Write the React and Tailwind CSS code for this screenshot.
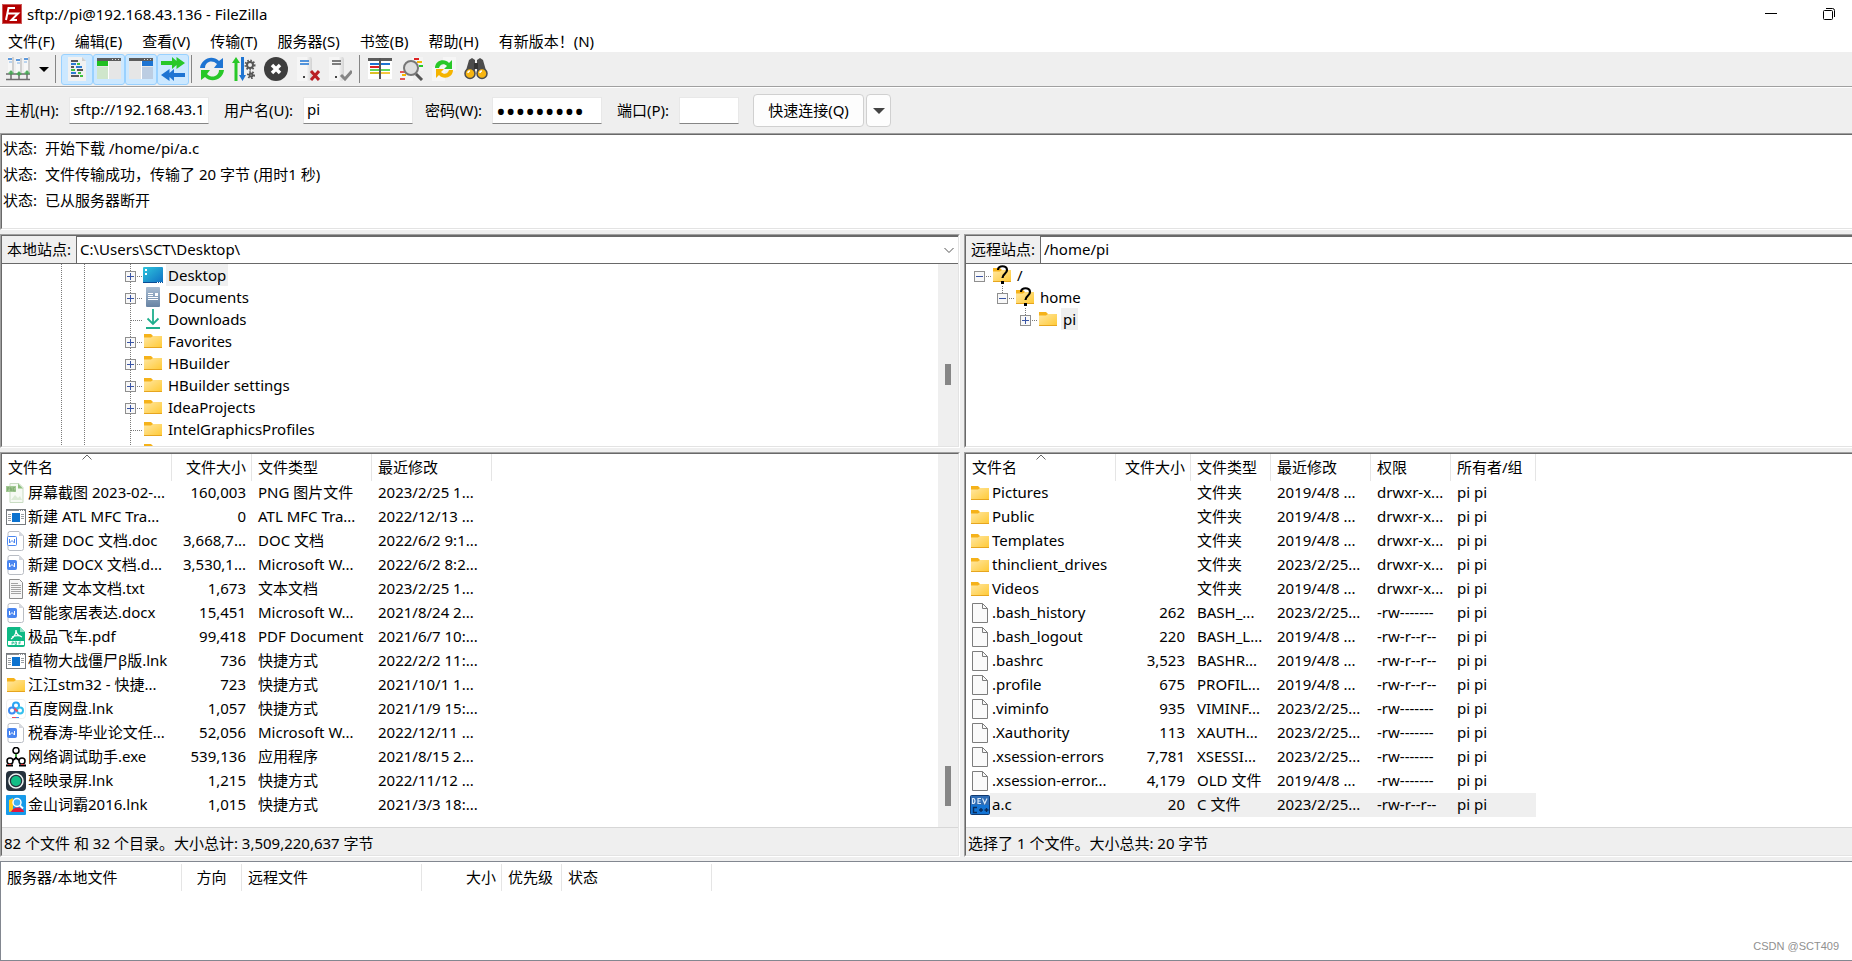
import React, { useState } from "react";

const menus = [
  "文件(F)",
  "编辑(E)",
  "查看(V)",
  "传输(T)",
  "服务器(S)",
  "书签(B)",
  "帮助(H)",
  "有新版本！(N)",
];

const logs = [
  "开始下载 /home/pi/a.c",
  "文件传输成功，传输了 20 字节 (用时1 秒)",
  "已从服务器断开",
];

const localTree = [
  { name: "Desktop", icon: "desktop", open: "plus", selected: true },
  { name: "Documents", icon: "documents", open: "plus" },
  { name: "Downloads", icon: "downloads" },
  { name: "Favorites", icon: "folder", open: "plus" },
  { name: "HBuilder", icon: "folder", open: "plus" },
  { name: "HBuilder settings", icon: "folder", open: "plus" },
  { name: "IdeaProjects", icon: "folder", open: "plus" },
  { name: "IntelGraphicsProfiles", icon: "folder" },
  { name: "Links", icon: "folder" },
];

const localColumns = [
  { label: "文件名", width: 170, sorted: true },
  { label: "文件大小", width: 80, right: true },
  { label: "文件类型", width: 120 },
  { label: "最近修改", width: 120 },
];

const localFiles = [
  ["png", "屏幕截图 2023-02-...", "160,003", "PNG 图片文件", "2023/2/25 1..."],
  ["app", "新建 ATL MFC Tra...", "0", "ATL MFC Tra...", "2022/12/13 ..."],
  ["doc", "新建 DOC 文档.doc", "3,668,7...", "DOC 文档", "2022/6/2 9:1..."],
  ["docx", "新建 DOCX 文档.d...", "3,530,1...", "Microsoft W...", "2022/6/2 8:2..."],
  ["txt", "新建 文本文档.txt", "1,673", "文本文档", "2023/2/25 1..."],
  ["docx", "智能家居表达.docx", "15,451", "Microsoft W...", "2021/8/24 2..."],
  ["pdf", "极品飞车.pdf", "99,418", "PDF Document", "2021/6/7 10:..."],
  ["app", "植物大战僵尸β版.lnk", "736", "快捷方式", "2022/2/2 11:..."],
  ["folder", "江江stm32 - 快捷...", "723", "快捷方式", "2021/10/1 1..."],
  ["baidu", "百度网盘.lnk", "1,057", "快捷方式", "2021/1/9 15:..."],
  ["docx", "税春涛-毕业论文任...", "52,056", "Microsoft W...", "2022/12/11 ..."],
  ["net", "网络调试助手.exe", "539,136", "应用程序", "2021/8/15 2..."],
  ["record", "轻映录屏.lnk", "1,215", "快捷方式", "2022/11/12 ..."],
  ["dict", "金山词霸2016.lnk", "1,015", "快捷方式", "2021/3/3 18:..."],
];

const remoteColumns = [
  { label: "文件名", width: 150, sorted: true },
  { label: "文件大小", width: 75, right: true },
  { label: "文件类型", width: 80 },
  { label: "最近修改", width: 100 },
  { label: "权限", width: 80 },
  { label: "所有者/组", width: 85 },
];

const remoteFiles = [
  ["folder", "Pictures", "", "文件夹", "2019/4/8 ...", "drwxr-x...", "pi pi"],
  ["folder", "Public", "", "文件夹", "2019/4/8 ...", "drwxr-x...", "pi pi"],
  ["folder", "Templates", "", "文件夹", "2019/4/8 ...", "drwxr-x...", "pi pi"],
  ["folder", "thinclient_drives", "", "文件夹", "2023/2/25...", "drwxr-x...", "pi pi"],
  ["folder", "Videos", "", "文件夹", "2019/4/8 ...", "drwxr-x...", "pi pi"],
  ["file", ".bash_history", "262", "BASH_...", "2023/2/25...", "-rw-------", "pi pi"],
  ["file", ".bash_logout", "220", "BASH_L...", "2019/4/8 ...", "-rw-r--r--", "pi pi"],
  ["file", ".bashrc", "3,523", "BASHR...", "2019/4/8 ...", "-rw-r--r--", "pi pi"],
  ["file", ".profile", "675", "PROFIL...", "2019/4/8 ...", "-rw-r--r--", "pi pi"],
  ["file", ".viminfo", "935", "VIMINF...", "2023/2/25...", "-rw-------", "pi pi"],
  ["file", ".Xauthority", "113", "XAUTH...", "2023/2/25...", "-rw-------", "pi pi"],
  ["file", ".xsession-errors", "7,781", "XSESSI...", "2023/2/25...", "-rw-------", "pi pi"],
  ["file", ".xsession-error...", "4,179", "OLD 文件", "2019/4/8 ...", "-rw-------", "pi pi"],
  ["dev", "a.c", "20", "C 文件", "2023/2/25...", "-rw-r--r--", "pi pi"],
];

const queueColumns = [
  { label: "服务器/本地文件", width: 181 },
  { label: "方向", width: 60, center: true },
  { label: "远程文件", width: 180 },
  { label: "大小", width: 80, right: true },
  { label: "优先级", width: 60 },
  { label: "状态", width: 150 },
];

// Small 20x20 icons used by the trees and the file lists
const WordPage = ({ solid }) => (
  <>
    <path d="M4 .5h9l4.500 4.500v12.500a2 2 0 0 1-2 2H4a2 2 0 0 1-2-2v-15a2 2 0 0 1 2-2z" fill="#fff" stroke="#b9bdc4" />
    <path d="M13 .5v4.500h4.500z" fill="#d5d8de" />
    <rect x="1.500" y="5.500" width="9" height="9" rx="1" fill={solid ? "#4a86f0" : "#fff"} stroke="#4a86f0" />
    <path d="M3.500 8v4l2.500-2.500L8.500 12V8" fill="none" stroke={solid ? "#fff" : "#4a86f0"} />
  </>
);

const Folder = () => (
  <>
    <path d="M1 3h7l2 2h9v3H1z" fill="#f5b21a" />
    <path d="M1 6.500h7l2-1.500h9v12H1z" fill="url(#folder)" />
    <path d="M1 16.500h18" stroke="#e6a51f" />
  </>
);

const fileIcons = {
  folder: <Folder />,
  unknown: (
    <>
      <Folder />
      <path d="M6 5c0-5 9-5 9 0 0 4-4.500 3.500-4.500 8" fill="none" stroke="#000" strokeWidth="2.200" />
      <path d="M9 16h3v3H9z" fill="#000" />
    </>
  ),
  desktop: (
    <>
      <rect x="0" y="2" width="20" height="16" rx="1" fill="url(#desktop)" />
      <path d="M2 4h2v2H2zM2 8h2v2H2z" fill="#fff" />
      <path d="M0 17.500h20" stroke="#0a4c94" />
      <path d="M14 17.500h5" stroke="#fff" strokeDasharray="1 1" />
    </>
  ),
  documents: (
    <>
      <rect x="3" y="0" width="14" height="20" rx="1" fill="url(#documents)" />
      <path d="M5 6.500h5M5 8.500h5M5 10.500h10M5 12.500h10" stroke="#fff" />
      <path d="M12 6h3v3h-3z" fill="#fff" />
    </>
  ),
  downloads: (
    <path d="M10 0v15M4.500 9.500l5.500 5.500 5.500-5.500M3 19h14" fill="none" stroke="#1faf8d" strokeWidth="1.800" />
  ),
  png: (
    <>
      <path d="M4 .5h9l4 4v15H4z" fill="#f6faf4" stroke="#c9dcc3" />
      <path d="M12 .5v5h5z" fill="#8fbf7f" />
      <path d="M5 17l4-5 3 3 2-2 2 4z" fill="#dcebd6" />
      <rect x="0" y="3" width="10" height="6" fill="#a3c995" />
      <path d="M1.500 8V4.500h1.500V6H1.500M4.500 8V4.500L6 8V4.500M9 4.500H7.500V8H9V6.500" fill="none" stroke="#7aa76b" strokeWidth=".7" />
    </>
  ),
  app: (
    <>
      <rect x=".5" y="2.500" width="19" height="15" fill="#fff" stroke="#75797d" />
      <path d="M1 3.500h18" stroke="#8b8f93" />
      <path d="M13 3.500h5" stroke="#fff" strokeDasharray="1 1" />
      <rect x="6" y="6" width="8" height="9" fill="#0c72cf" />
      <path d="M2 7.500h3M2 9.500h3M2 11.500h3M2 13.500h3M15 7.500h3M15 9.500h3M15 11.500h3" stroke="#9b9fa3" />
    </>
  ),
  doc: <WordPage />,
  docx: <WordPage solid />,
  txt: (
    <>
      <path d="M3.500.5h10l3 3v16h-13z" fill="#f7f7f7" stroke="#8d8d8d" />
      <path d="M5 4.500h7M5 6.500h10M5 8.500h10M5 10.500h10M5 12.500h10M5 14.500h10" stroke="#a3a3a3" />
    </>
  ),
  pdf: (
    <>
      <path d="M2 0h12l5 5v13a2 2 0 0 1-2 2H3a2 2 0 0 1-2-2V1z" fill="#0fb985" />
      <path d="M14 0v5h5z" fill="#8be0c4" />
      <path d="M10 3c0 4-2 7-5 9M10 3c0 4 3 6 6 7M6 10c3-1.500 6-1.500 9-1" fill="none" stroke="#fff" strokeWidth="1.200" />
      <path d="M2 14h16v4H2z" fill="#fff" />
      <path d="M6 17.500v-2.500h1.500v1.200H6M9 15v2.500h1.500V15zM13 17.500V15h2M13 16.200h1.500" fill="none" stroke="#0fb985" strokeWidth=".7" />
    </>
  ),
  baidu: (
    <>
      <rect x=".5" y=".5" width="19" height="19" rx="3" fill="#fff" stroke="#f0f0f0" />
      <circle cx="10" cy="6.500" r="3" fill="none" stroke="#29a5f5" strokeWidth="2" />
      <circle cx="6" cy="11.500" r="3" fill="none" stroke="#3e8bf2" strokeWidth="2" />
      <circle cx="14" cy="11.500" r="3" fill="none" stroke="#35c0ee" strokeWidth="2" />
      <path d="M8.500 9.500l3 3" stroke="#ef4b5f" strokeWidth="2" />
      <path d="M6 18.500h4" stroke="#ef4b5f" />
      <path d="M10 18.500h3" stroke="#3e8bf2" />
    </>
  ),
  net: (
    <>
      <path d="M10 6v5l-6 4M10 11l6 4" fill="none" stroke="#000" strokeWidth="2" />
      <circle cx="10" cy="3.500" r="3" fill="#fff" stroke="#000" strokeWidth="1.500" />
      <circle cx="4" cy="14" r="3" fill="#fff" stroke="#000" strokeWidth="1.500" />
      <circle cx="16" cy="14" r="3" fill="#fff" stroke="#000" strokeWidth="1.500" />
      <path d="M0 18.500h7M13 18.500h7" stroke="#000" strokeWidth="2" />
      <path d="M10 7v3" stroke="#4fd04a" strokeWidth="1.500" />
      <path d="M2 17.500h3M15 17.500h3" stroke="#d33" />
    </>
  ),
  record: (
    <>
      <rect width="20" height="20" rx="4" fill="#26323d" />
      <circle cx="10" cy="10" r="7" fill="none" stroke="#eef4f2" strokeWidth="1.500" />
      <circle cx="10" cy="10" r="5" fill="#12bf86" />
    </>
  ),
  dict: (
    <>
      <rect width="20" height="20" rx="1" fill="#189bea" />
      <path d="M3 5l4-2v13l-4 1z" fill="#ffc81e" />
      <path d="M5 17c2-6 12-6 13 0z" fill="#e3173e" />
      <circle cx="11" cy="7.500" r="4" fill="#3fb0f2" stroke="#fff" strokeWidth="1.500" />
      <path d="M14 10.500l3 3" stroke="#fff" strokeWidth="1.800" />
    </>
  ),
  file: (
    <>
      <path d="M2.500.5h10l5 5v14h-15z" fill="#fafafa" stroke="#7d7d7d" />
      <path d="M12.500.5v5h5" fill="none" stroke="#7d7d7d" />
    </>
  ),
  dev: (
    <>
      <rect x=".5" y=".5" width="19" height="19" rx="1" fill="#1474d4" stroke="#123a70" />
      <path d="M1 1h18v9H1z" fill="#2f6db5" />
      <path d="M2.500 3.500v5h1.500q2-2.500 0-5zM11 3.500H8v5h3M8 6h2.500M12.500 3.500l2.200 5 2.300-5" fill="none" stroke="#d9e8f8" strokeWidth="1.200" />
      <path d="M7 12.500H3.500v5H7M9 15h4M11 13v4M14.500 15h4M16.500 13v4" fill="none" stroke="#0a2c5c" strokeWidth="1.400" />
    </>
  ),
};

const FileIcon = ({ name }) => (
  <svg className="h-5 w-5 shrink-0" viewBox="0 0 20 20" aria-hidden="true">
    {fileIcons[name]}
  </svg>
);

// Gradients shared by all the small icons
const IconDefs = () => (
  <svg className="absolute h-0 w-0" aria-hidden="true">
    <defs>
      <linearGradient id="folder" x1="0" y1="0" x2="1" y2="1">
        <stop offset="0" stopColor="#ffe7a3" />
        <stop offset="1" stopColor="#ffc933" />
      </linearGradient>
      <linearGradient id="desktop" x1="0" y1="0" x2="1" y2="1">
        <stop offset="0" stopColor="#2fc6dc" />
        <stop offset="1" stopColor="#0f6fc4" />
      </linearGradient>
      <linearGradient id="documents" x1="0" y1="0" x2="0" y2="1">
        <stop offset="0" stopColor="#a9bdd3" />
        <stop offset="1" stopColor="#6783a3" />
      </linearGradient>
      <linearGradient id="server" x1="0" y1="0" x2="1" y2="0">
        <stop offset="0" stopColor="#fafafa" />
        <stop offset="1" stopColor="#d2d2d2" />
      </linearGradient>
    </defs>
  </svg>
);

const Gear = ({ cx, cy, r }) => (
  <g stroke="#555" fill="none">
    <circle cx={cx} cy={cy} r={r} strokeWidth="2" />
    <circle cx={cx} cy={cy} r={r + 1.5} strokeWidth="2" strokeDasharray="1.500 1.500" />
  </g>
);

const Server = () => (
  <>
    <path d="M1 0h9v24H1z" fill="#f6f6f6" />
    <path d="M10 0h5l1 2v20l-2 2h-4z" fill="url(#server)" />
  </>
);

// 24x24 toolbar icons
const toolIcons = {
  sites: (
    <>
      <path d="M2 0h6v16H2zM10 1h6v15h-6zM18 0h5v16h-5z" fill="#f7f7f7" />
      <path d="M6 0h2v16H6zM14 1h2v15h-2zM22 0h2v16h-2z" fill="#d0d0d0" />
      <path d="M2 2h4M10 3h4M18 2h4" stroke="#2d7bd2" strokeWidth="1.500" />
      <path d="M3 5h3M11 6h3M18 5h3" stroke="#7fb0e4" />
      <path d="M0 17h24M5 14v9M13 15v8M21 14v9M0 22.500h24" stroke="#6d6d6d" strokeWidth="1.500" fill="none" />
      <path d="M2 16l3-3 3 3-3 2zM10 17l3-3 3 3-3 2zM18 16l3-3 3 3-3 2z" fill="#39b54a" opacity=".7" />
    </>
  ),
  log: (
    <>
      <path d="M3 0h14l4 4v20H3z" fill="#f1f1f1" />
      <path d="M17 0v4h4z" fill="#cfcfcf" />
      <path d="M6 4h7M6 10h3M12 13h6M6 19h8" stroke="#555" strokeWidth="2" />
      <path d="M6 7h5M11 10h6M6 16h5" stroke="#2d7bd2" strokeWidth="2" />
      <path d="M12 7h3M6 13h4M15 19h3M13 16h3" stroke="#3fc13f" strokeWidth="2" />
    </>
  ),
  local: (
    <>
      <path d="M0 4h24v18H0z" fill="#e6e6e6" />
      <path d="M0 1h24v3H0z" fill="#5c5c5c" />
      <path d="M15 2.500h8" stroke="#ddd" strokeDasharray="1 2" />
      <path d="M0 4h11v5H0z" fill="#21c021" />
      <path d="M0 10h11v12H0z" fill="#cfe6cb" />
      <path d="M11.500 4v18" stroke="#fff" />
    </>
  ),
  remote: (
    <>
      <path d="M0 4h24v18H0z" fill="#e6e6e6" />
      <path d="M0 1h24v3H0z" fill="#5c5c5c" />
      <path d="M15 2.500h8" stroke="#ddd" strokeDasharray="1 2" />
      <path d="M13 4h11v5H13z" fill="#1e74d2" />
      <path d="M13 10h11v12H13z" fill="#bccde2" />
      <path d="M12.500 4v18" stroke="#fff" />
    </>
  ),
  queue: (
    <>
      <path d="M0 4h11V0l4.500 4V0L24 6l-8.500 6V8L11 12V8H0z" fill="#28c828" />
      <path d="M24 16H13v-4l-4.500 4v-4L0 18l8.500 6v-4l4.500 4v-4h11z" fill="#1e74d2" />
    </>
  ),
  refresh: (
    <>
      <path d="M0 11C1 2 12-3 19 4l4-3v10H14l3-4C12 2 5 5 5 11z" fill="#1e74d2" />
      <path d="M24 13c-1 9-12 14-19 7l-4 3V13h9l-3 4c5 5 12 2 12-4z" fill="#28c828" />
    </>
  ),
  filter: (
    <>
      <path d="M0 6l4-6 4 6H5.500v18h-3V6z" fill="#28c828" />
      <path d="M9 0h3v18h2l-3.500 6L7 18h2z" fill="#1e74d2" />
      <Gear cx={18} cy={8} r={3} />
      <Gear cx={19} cy={18} r={1.5} />
    </>
  ),
  cancel: (
    <>
      <circle cx="12" cy="12" r="12" fill="#3e3e3e" />
      <path d="M8 8l8 8M16 8l-8 8" stroke="#fff" strokeWidth="3.500" />
    </>
  ),
  disconnect: (
    <>
      <Server />
      <path d="M4 4h9M4 7h9" stroke="#1e74d2" strokeWidth="1.500" />
      <path d="M7 19h2v2H7z" fill="#444" />
      <path d="M15 14l8 9M23 14l-8 9" stroke="#b91f24" strokeWidth="3" />
    </>
  ),
  reconnect: (
    <>
      <Server />
      <path d="M4 4h9M4 7h9" stroke="#555" strokeWidth="1.500" />
      <path d="M7 19h2v2H7z" fill="#444" />
      <path d="M13 18l4 4 7-8" stroke="#858585" strokeWidth="3" fill="none" />
    </>
  ),
  compare: (
    <>
      <path d="M0 2h24v20H0z" fill="#fff" />
      <path d="M0 1h24v3H0z" fill="#5c5c5c" />
      <path d="M2 7h20" stroke="#1e74d2" strokeWidth="2" />
      <path d="M2 10h9" stroke="#d22" strokeWidth="2" />
      <path d="M2 13h20" stroke="#28c828" strokeWidth="1.500" />
      <path d="M2 16h9" stroke="#28c828" />
      <path d="M2 16h20" stroke="#f5b400" strokeWidth="1.500" />
      <path d="M12 1v21" stroke="#555" strokeWidth="2" />
    </>
  ),
  search: (
    <>
      <path d="M12 0h11v14H12zM0 13h13v11H0z" fill="#f4f4f4" />
      <path d="M14 2h5" stroke="#d22" strokeWidth="2" />
      <path d="M17 5h5M2 18h4" stroke="#f5b400" strokeWidth="2" />
      <path d="M19 9h4" stroke="#28c828" strokeWidth="2" />
      <path d="M0 15h5M0 22h5" stroke="#d22" strokeWidth="1.500" />
      <circle cx="11" cy="11" r="7" fill="#dedede" stroke="#777" strokeWidth="2" />
      <path d="M16 17l6 6" stroke="#555" strokeWidth="3" />
    </>
  ),
  sync: (
    <>
      <path d="M11 0h13v14H11zM0 10h13v14H0z" fill="#f6f6f6" />
      <path d="M3 11c0-8 10-10 14-5l3-3v9h-8l3-3c-3-3-7-2-8 2z" fill="#28c828" />
      <path d="M21 13c0 8-10 10-14 5l-3 3v-9h8l-3 3c3 3 7 2 8-2z" fill="#f5b400" />
    </>
  ),
  find: (
    <>
      <path d="M5 3l3-2 3 2v14H1zM19 3l-3-2-3 2v14h10z" fill="#4c4c4c" />
      <path d="M10 6h4v6h-4z" fill="#333" />
      <circle cx="6" cy="16.500" r="5" fill="#f7b512" stroke="#4c4c4c" strokeWidth="1.500" />
      <circle cx="18" cy="16.500" r="5" fill="#f7b512" stroke="#4c4c4c" strokeWidth="1.500" />
      <path d="M4 16c0-1.500 1-2 2-2M16 16c0-1.500 1-2 2-2" stroke="#fff" fill="none" strokeWidth="1.500" />
    </>
  ),
};

const ToolButton = ({ name, label, active }) => (
  <button
    aria-label={label}
    aria-pressed={active}
    className={`flex h-[31px] w-8 items-center justify-center rounded-[3px] border ${
      active ? "border-[#99d1ff] bg-[#cce8ff]" : "border-transparent"
    }`}
  >
    <svg className="h-6 w-6" viewBox="0 0 24 24" aria-hidden="true">
      {toolIcons[name]}
    </svg>
  </button>
);

const Divider = () => <div className="h-7 w-px bg-[#858585]" />;

const Field = ({ id, label, width, type = "text", value }) => {
  const [text, setText] = useState(value || "");
  return (
    <>
      <label htmlFor={id} className="shrink-0 pb-[2px] whitespace-nowrap">
        {label}
      </label>
      <input
        id={id}
        type={type}
        value={text}
        onChange={(e) => setText(e.target.value)}
        className={`h-[27px] border border-[#e8e8e8] border-b-[#868686] bg-white px-[3px] outline-none ${width} ${
          type === "password" ? "text-[26px]" : "pb-[3px]"
        }`}
      />
    </>
  );
};

// Vertical dotted line of an outer tree level
const Guide = () => (
  <svg className="h-[22px] w-px shrink-0" viewBox="0 0 1 22" aria-hidden="true">
    <path d="M.5 0v22" stroke="#7a7a7a" strokeDasharray="1 1" />
  </svg>
);

// Dotted connector lines with the expand box on top
const Branch = ({ open, up = true, down = true }) => (
  <svg className="h-[22px] w-[18px] shrink-0" viewBox="0 0 18 22" aria-hidden="true">
    {up && <path d="M5.500 0v12" stroke="#7a7a7a" strokeDasharray="1 1" />}
    {down && <path d="M5.500 12v10" stroke="#7a7a7a" strokeDasharray="1 1" />}
    <path d="M6 12.500h11" stroke="#7a7a7a" strokeDasharray="1 1" />
    {open && (
      <>
        <rect x=".5" y="7.500" width="10" height="10" fill="#f8f8f8" stroke="#8f8f8f" />
        <path d="M2 12.500h7" stroke="#3a55a5" />
        {open === "plus" && <path d="M5.500 9v7" stroke="#3a55a5" />}
      </>
    )}
  </svg>
);

const TreeLabel = ({ icon, name, selected }) => (
  <>
    <FileIcon name={icon} />
    <span className={`ml-[3px] h-[22px] px-[2px] leading-[22px] whitespace-nowrap ${selected ? "bg-[#efefef]" : ""}`}>
      {name}
    </span>
  </>
);

const SiteBar = ({ id, label, path, chevron }) => (
  <div className="flex h-7 border-b border-[#696969]">
    <label
      htmlFor={id}
      className="flex w-[75px] shrink-0 items-center border-r border-[#696969] bg-[#efefef] pb-px pl-[5px] whitespace-nowrap"
    >
      {label}
    </label>
    <div className="relative flex-1 border-t border-[#696969]">
      <select id={id} className="h-full w-full appearance-none bg-white pb-[2px] pl-[3px] outline-none">
        <option>{path}</option>
      </select>
      {chevron && (
        <svg className="pointer-events-none absolute top-2 right-1 h-[10px] w-[10px]" viewBox="0 0 10 10" aria-hidden="true">
          <path d="M.5 3l4.500 4.500L9.500 3" fill="none" stroke="#555" />
        </svg>
      )}
    </div>
  </div>
);

// Sunken frame around each pane
const Pane = ({ children, open, className = "" }) => (
  <div
    className={`border-t border-b border-l border-t-[#a0a0a0] border-b-white border-l-[#a0a0a0] ${
      open ? "" : "border-r border-r-white"
    } ${className}`}
  >
    <div
      className={`h-full border-t border-b border-l border-t-[#696969] border-b-[#e3e3e3] border-l-[#696969] bg-white ${
        open ? "" : "border-r border-r-[#e3e3e3]"
      }`}
    >
      {children}
    </div>
  </div>
);

const HeadRow = ({ columns }) => (
  <tr className="h-[27px]">
    {columns.map((col) => (
      <th
        key={col.label}
        style={{ width: col.width }}
        className={`relative border-r border-[#e5e5e5] p-0 pb-[2px] font-normal whitespace-nowrap ${
          col.right ? "pr-[5px] text-right" : col.center ? "text-center" : "pl-[6px] text-left"
        }`}
      >
        {col.label}
        {col.sorted && (
          <svg
            className="absolute top-0 left-1/2 h-[7px] w-[10px] -translate-x-1/2"
            viewBox="0 0 10 7"
            aria-hidden="true"
          >
            <path d="M.5 5.500L5 1l4.500 4.500" fill="none" stroke="#666" />
          </svg>
        )}
      </th>
    ))}
  </tr>
);

const FileTable = ({ columns, files, selected }) => {
  const width = columns.reduce((sum, col) => sum + col.width, 0);
  return (
    <table className="table-fixed border-separate border-spacing-0" style={{ width }}>
      <thead>
        <HeadRow columns={columns} />
      </thead>
      <tbody>
        {files.map(([icon, name, ...cells]) => (
          <tr key={name} className="h-6">
            <td className="p-0 pl-1">
              <div className="flex h-6 items-center">
                <FileIcon name={icon} />
                <span
                  className={`h-6 flex-1 pl-[2px] leading-[22px] whitespace-nowrap ${
                    name === selected ? "bg-[#efefef]" : ""
                  }`}
                >
                  {name}
                </span>
              </div>
            </td>
            {cells.map((cell, i) => (
              <td
                key={i}
                className={`p-0 align-top leading-[22px] whitespace-nowrap ${
                  i === 0 ? "pr-[6px] text-right" : "pl-[6px]"
                } ${name === selected ? "bg-[#efefef]" : ""}`}
              >
                {cell}
              </td>
            ))}
          </tr>
        ))}
      </tbody>
    </table>
  );
};

const ScrollBar = ({ before, thumb }) => (
  <div className="flex w-5 shrink-0 flex-col items-center bg-[#efefef]">
    <div className={before} />
    <div className={`w-[6px] bg-[#868686] ${thumb}`} />
  </div>
);

const App = () => {
  return (
    <div className="flex min-h-screen flex-col overflow-hidden bg-[#efefef] font-['Noto_Sans','Noto_Sans_CJK_SC',sans-serif] text-[15px] leading-5 text-black">
      <IconDefs />

      <header className="bg-white">
        <div className="flex h-7 items-center pl-[2px]">
          <svg className="h-5 w-5" viewBox="0 0 20 20" aria-hidden="true">
            <rect width="20" height="20" fill="#b30000" />
            <rect x=".5" y=".5" width="19" height="19" fill="none" stroke="#e9b4b4" strokeDasharray="1 1" />
            <path d="M4 16L6.500 4H13M5.500 9.500H11M9.500 9.500H16L9.500 16H15" fill="none" stroke="#fff" strokeWidth="2" />
          </svg>
          <h1 className="ml-[5px] flex-1">sftp://pi@192.168.43.136 - FileZilla</h1>
          <button aria-label="最小化" className="mr-[46px] flex w-3 justify-center">
            <svg className="h-3 w-3" viewBox="0 0 12 12">
              <path d="M0 5.500h12" stroke="#000" />
            </svg>
          </button>
          <button aria-label="还原" className="mr-[17px] flex w-3 justify-center">
            <svg className="h-3 w-3" viewBox="0 0 12 12" fill="none" stroke="#000">
              <rect x=".5" y="2.500" width="9" height="9" rx="1" />
              <path d="M3 .5h6.500a2 2 0 0 1 2 2V9" />
            </svg>
          </button>
        </div>
        <nav className="flex h-6 items-center gap-5 pt-[2px] pl-2">
          {menus.map((menu) => (
            <button key={menu} className="whitespace-nowrap">
              {menu}
            </button>
          ))}
        </nav>
      </header>

      <div className="flex h-[35px] items-center border-b border-[#a0a0a0] pl-[2px]">
        <ToolButton name="sites" label="站点管理器" />
        <button aria-label="站点列表" className="flex w-[19px] justify-center">
          <svg className="h-[5px] w-[10px]" viewBox="0 0 10 5">
            <path d="M0 0h10L5 5z" />
          </svg>
        </button>
        <div className="mr-[5px] ml-[2px]">
          <Divider />
        </div>
        <ToolButton name="log" label="消息日志" active />
        <ToolButton name="local" label="本地目录树" active />
        <ToolButton name="remote" label="远程目录树" active />
        <ToolButton name="queue" label="传输队列" active />
        <div className="mr-[4px] ml-[2px]">
          <Divider />
        </div>
        <ToolButton name="refresh" label="刷新" />
        <ToolButton name="filter" label="处理队列" />
        <ToolButton name="cancel" label="取消" />
        <ToolButton name="disconnect" label="断开" />
        <ToolButton name="reconnect" label="重新连接" />
        <div className="mr-[4px] ml-[3px]">
          <Divider />
        </div>
        <ToolButton name="compare" label="目录比较" />
        <ToolButton name="search" label="过滤器" />
        <ToolButton name="sync" label="同步浏览" />
        <ToolButton name="find" label="搜索" />
      </div>

      <form className="flex h-[46px] items-center border-t border-white pl-[5px]" onSubmit={(e) => e.preventDefault()}>
        <div className="flex w-[219px] items-center gap-[10px]">
          <Field id="host" label="主机(H):" width="w-[140px]" value="sftp://192.168.43.136" />
        </div>
        <div className="flex w-[201px] items-center gap-[10px]">
          <Field id="user" label="用户名(U):" width="w-[110px]" value="pi" />
        </div>
        <div className="flex w-[192px] items-center gap-[10px]">
          <Field id="pass" label="密码(W):" width="w-[110px]" type="password" value="raspberry" />
        </div>
        <div className="flex w-[136px] items-center gap-[10px]">
          <Field id="port" label="端口(P):" width="w-[60px]" />
        </div>
        <button className="h-[33px] w-[111px] rounded border border-[#d0d0d0] bg-[#fdfdfd] pb-[2px]">快速连接(Q)</button>
        <button
          aria-label="历史记录"
          className="ml-[2px] flex h-[33px] w-[25px] items-center justify-center rounded border border-[#d0d0d0] bg-[#fdfdfd]"
        >
          <svg className="h-[6px] w-3" viewBox="0 0 12 6">
            <path d="M0 0h12L6 6z" fill="#444" />
          </svg>
        </button>
      </form>

      <Pane open className="h-[97px]">
        <ul>
          {logs.map((log) => (
            <li key={log} className="flex h-[26px] items-center pl-[1px]">
              <span className="w-[42px] whitespace-nowrap">状态:</span>
              <span className="whitespace-nowrap">{log}</span>
            </li>
          ))}
        </ul>
      </Pane>

      <main className="mt-1 flex gap-1">
        <section className="flex min-w-0 flex-[960] flex-col gap-1">
          <Pane>
            <SiteBar id="local" label="本地站点:" path="C:\Users\SCT\Desktop\" chevron />
            <div className="flex h-[182px]">
              <ul className="min-w-0 flex-1 overflow-hidden">
                {localTree.map((node) => (
                  <li key={node.name} className="flex h-[22px] items-center pl-[59px]">
                    <Guide />
                    <div className="w-[22px] shrink-0" />
                    <Guide />
                    <div className="w-10 shrink-0" />
                    <Branch open={node.open} />
                    <TreeLabel {...node} />
                  </li>
                ))}
              </ul>
              <ScrollBar before="h-[100px]" thumb="h-[21px]" />
            </div>
          </Pane>
          <Pane>
            <div className="flex h-[373px]">
              <div className="min-w-0 flex-1 overflow-hidden">
                <FileTable columns={localColumns} files={localFiles} />
              </div>
              <ScrollBar before="h-[312px]" thumb="h-10" />
            </div>
            <div className="flex h-7 items-center border-t border-[#d7d7d7] bg-[#efefef] pt-[2px] pl-[2px]">
              82 个文件 和 32 个目录。大小总计: 3,509,220,637 字节
            </div>
          </Pane>
        </section>

        <section className="flex min-w-0 flex-[888] flex-col gap-1">
          <Pane open>
            <SiteBar id="remote" label="远程站点:" path="/home/pi" />
            <ul className="h-[182px]">
              <li className="flex h-[22px] items-center pl-2">
                <Branch open="minus" up={false} down={false} />
                <TreeLabel icon="unknown" name="/" />
              </li>
              <li className="flex h-[22px] items-center pl-[31px]">
                <Branch open="minus" down={false} />
                <TreeLabel icon="unknown" name="home" />
              </li>
              <li className="flex h-[22px] items-center pl-[54px]">
                <Branch open="plus" down={false} />
                <TreeLabel icon="folder" name="pi" selected />
              </li>
            </ul>
          </Pane>
          <Pane open>
            <div className="h-[373px] overflow-hidden">
              <FileTable columns={remoteColumns} files={remoteFiles} selected="a.c" />
            </div>
            <div className="flex h-7 items-center border-t border-[#d7d7d7] bg-[#efefef] pt-[2px] pl-[2px]">
              选择了 1 个文件。大小总共: 20 字节
            </div>
          </Pane>
        </section>
      </main>

      <footer className="mt-1 flex flex-1 flex-col border border-r-0 border-[#828790] bg-white pt-[2px]">
        <table className="table-fixed border-separate border-spacing-0 self-start" style={{ width: 711 }}>
          <thead>
            <HeadRow columns={queueColumns} />
          </thead>
        </table>
        <p className="mt-auto mr-[13px] mb-1 text-right font-['Liberation_Sans',sans-serif] text-[11px] text-[#909090]">
          CSDN @SCT409
        </p>
      </footer>
    </div>
  );
};

export default App;
